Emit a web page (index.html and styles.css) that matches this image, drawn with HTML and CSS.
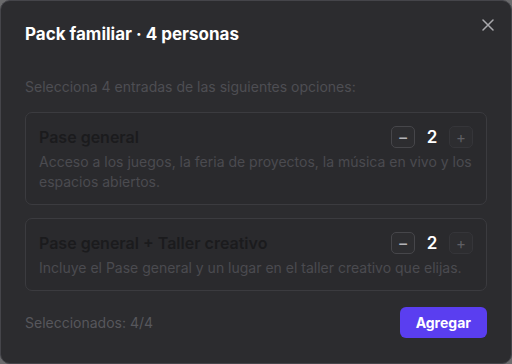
FILE: index.html
```html
<!DOCTYPE html>
<html lang="es">
<head>
    <meta charset="UTF-8">
    <meta name="viewport" content="width=device-width, initial-scale=1.0">
    <title>Pack familiar</title>
    <link rel="stylesheet" href="styles.css">
</head>
<body>
    <div class="modal">
        <div class="modal-header">
            <h2 class="modal-title">Pack familiar · 4 personas</h2>
            <button class="close-button" aria-label="Cerrar">
                <svg width="12" height="12" viewBox="0 0 12 12"><path d="M1 1L11 11M11 1L1 11" stroke="currentColor" stroke-width="1.5" stroke-linecap="round"/></svg>
            </button>
        </div>

        <p class="modal-intro">Selecciona 4 entradas de las siguientes opciones:</p>

        <div class="option-list">
            <div class="option-card">
                <div class="option-top">
                    <div class="option-name">Pase general</div>
                    <div class="stepper">
                        <button class="step-button minus">−</button>
                        <span class="step-value">2</span>
                        <button class="step-button plus" disabled>+</button>
                    </div>
                </div>
                <p class="option-desc">Acceso a los juegos, la feria de proyectos, la música en vivo y los espacios abiertos.</p>
            </div>
            <div class="option-card">
                <div class="option-top">
                    <div class="option-name">Pase general + Taller creativo</div>
                    <div class="stepper">
                        <button class="step-button minus">−</button>
                        <span class="step-value">2</span>
                        <button class="step-button plus" disabled>+</button>
                    </div>
                </div>
                <p class="option-desc">Incluye el Pase general y un lugar en el taller creativo que elijas.</p>
            </div>
        </div>

        <div class="modal-footer">
            <span class="selected-count">Seleccionados: 4/4</span>
            <button class="add-button">Agregar</button>
        </div>
    </div>
</body>
</html>
```

FILE: styles.css
```css
body {
    margin: 0;
    background-color: #6a6a6c;
    font-family: Inter, "Noto Sans", sans-serif;
}

.modal {
    box-sizing: border-box;
    width: 512px;
    height: 364px;
    background-color: #2c2c2f;
    border: 1px solid #45454a;
    border-radius: 10px;
    padding: 21px 24px 25px;
    display: flex;
    flex-direction: column;
}

.modal-header {
    display: flex;
    justify-content: space-between;
    align-items: flex-start;
}

.modal-title {
    margin: 0;
    font-size: 17px;
    line-height: 24px;
    font-weight: 700;
    color: #ffffff;
}

.close-button {
    background: none;
    border: none;
    padding: 0;
    margin: -3px -7px 0 0;
    color: #a9a9ad;
    display: flex;
    cursor: pointer;
}

.modal-intro {
    margin: 31px 0 15px;
    font-size: 14px;
    line-height: 20px;
    color: #4e4e53;
}

.option-list {
    display: flex;
    flex-direction: column;
    gap: 13px;
}

.option-card {
    border: 1px solid #3b3b3f;
    border-radius: 7px;
    background-color: #2a2a2d;
    padding: 13px 13px 12px;
}

.option-top {
    display: flex;
    justify-content: space-between;
    align-items: center;
}

.option-name {
    font-size: 16px;
    line-height: 22px;
    font-weight: 600;
    color: #1b1b1d;
}

.stepper {
    display: flex;
    align-items: center;
    gap: 11px;
}

.step-button {
    width: 24px;
    height: 22px;
    padding: 0;
    border-radius: 5px;
    font-family: inherit;
    font-size: 17px;
    line-height: 1;
    background-color: #2d2d30;
    border: 1px solid #46464a;
    color: #b3b3b7;
}

.step-button.plus {
    font-size: 15px;
    border-color: #353539;
    color: #5e5e63;
}

.step-value {
    width: 12px;
    text-align: center;
    font-size: 17px;
    font-weight: 600;
    color: #ffffff;
}

.option-desc {
    margin: 4px 0 0;
    font-size: 14px;
    line-height: 20px;
    color: #4b4b50;
}

.modal-footer {
    margin-top: auto;
    display: flex;
    justify-content: space-between;
    align-items: center;
}

.selected-count {
    font-size: 14px;
    color: #57575c;
}

.add-button {
    background-color: #5a3ef0;
    color: #ffffff;
    border: none;
    border-radius: 6px;
    padding: 0 16px;
    height: 31px;
    font-family: inherit;
    font-size: 14px;
    font-weight: 700;
    cursor: pointer;
}
```
